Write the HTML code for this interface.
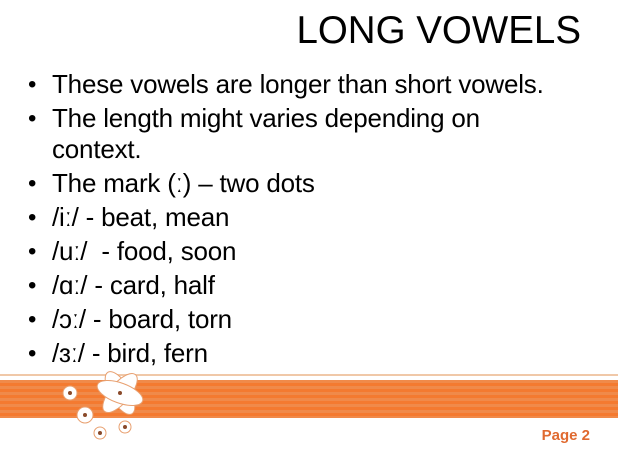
<!DOCTYPE html>
<html><head><style>
body{margin:0;width:618px;height:452px;background:#fff;position:relative;overflow:hidden;font-family:"Liberation Sans",Arial,sans-serif;}
.title{position:absolute;right:37px;top:9px;font-size:38.5px;color:#000;white-space:nowrap;}
ul{position:absolute;left:28px;top:69px;margin:0;padding:0;list-style:none;font-size:26px;color:#000;}
li{position:relative;padding-left:24px;line-height:31px;margin-bottom:3px;width:520px;letter-spacing:-0.2px;}
li:before{content:"•";position:absolute;left:0;top:0;font-size:24px;}
.band{position:absolute;left:0;top:380px;width:618px;height:38px;background:repeating-linear-gradient(#f08a4a 0 3px,#f47a30 3px 6px);}
.line{position:absolute;left:0;top:374px;width:618px;height:2px;background:#f0c8a8;}
.page{position:absolute;right:28px;top:427px;font-size:15px;font-weight:bold;color:#e06a30;}
</style></head><body>
<div class="title">LONG VOWELS</div>
<ul>
<li>These vowels are longer than short vowels.</li>
<li>The length might varies depending on context.</li>
<li>The mark (ː) – two dots</li>
<li>/iː/ - beat, mean</li>
<li>/uː/&nbsp; - food, soon</li>
<li>/ɑː/ - card, half</li>
<li>/ɔː/ - board, torn</li>
<li>/ɜː/ - bird, fern</li>
</ul>
<div class="line"></div>
<div class="band"></div>
<svg style="position:absolute;left:50px;top:365px" width="110" height="80">
<g fill="#fff" stroke="#e8a070" stroke-width="1">
<ellipse cx="70" cy="28" rx="10" ry="24" transform="rotate(-30 70 28)"/>
<ellipse cx="70" cy="28" rx="10" ry="24" transform="rotate(40 70 28)"/>
<ellipse cx="70" cy="28" rx="10" ry="24" transform="rotate(110 70 28)"/>
<circle cx="20" cy="28" r="7"/><circle cx="35" cy="50" r="8"/><circle cx="50" cy="68" r="6"/><circle cx="75" cy="62" r="6"/>
</g>
<g fill="#8a4a2a"><circle cx="70" cy="28" r="2"/><circle cx="20" cy="28" r="2"/><circle cx="35" cy="50" r="2"/><circle cx="50" cy="68" r="2"/><circle cx="75" cy="62" r="2"/></g>
</svg>
<div class="page">Page 2</div>
</body></html>
